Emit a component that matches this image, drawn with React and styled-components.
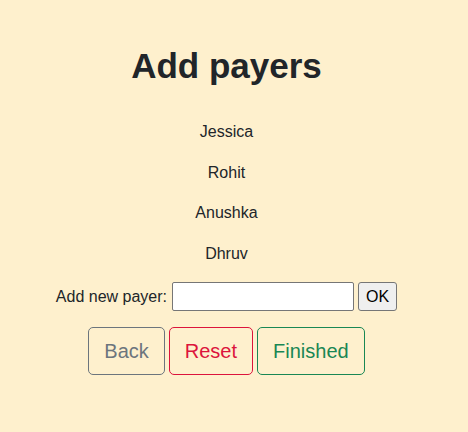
import React, { useState } from 'react';
import styled, { createGlobalStyle } from 'styled-components';

const GlobalStyle = createGlobalStyle`
  html, body {
    margin: 0;
    padding: 0;
    background: #fef0cd;
  }
  body {
    font-family: "Liberation Sans", Arial, sans-serif;
    color: #212529;
    font-size: 16px;
    line-height: 1.5;
  }
`;

const Page = styled.main`
  min-height: 432px;
  padding: 45px 15px 0 0;
  box-sizing: border-box;
  text-align: center;
`;

const Title = styled.h1`
  margin: 0 0 33px;
  font-size: 35px;
  font-weight: 700;
  line-height: 1.2;
`;

const Payer = styled.p`
  margin: 0 0 16.5px;
`;

const AddRow = styled.form`
  display: flex;
  justify-content: center;
  align-items: center;
  gap: 4px;
  margin-bottom: 16px;
`;

const Label = styled.label`
  margin-right: 1px;
`;

const TextInput = styled.input`
  width: 182px;
  height: 29px;
  box-sizing: border-box;
  border: 1px solid #767676;
  border-radius: 2px;
  background: #fff;
  font: inherit;
  padding: 1px 3px;
`;

const OkButton = styled.button`
  height: 29px;
  box-sizing: border-box;
  padding: 0 7px;
  border: 1px solid #767676;
  border-radius: 3px;
  background: #efefef;
  color: #000;
  font: 16px "Liberation Sans", Arial, sans-serif;
`;

const Actions = styled.div`
  display: flex;
  justify-content: center;
  gap: 4px;
`;

const tones = {
  secondary: '#6c757d',
  danger: '#dc143c',
  success: '#198754',
};

const OutlineButton = styled.button`
  height: 48px;
  padding: 0 15px;
  font: 20px/1.5 "Liberation Sans", Arial, sans-serif;
  border-radius: 5px;
  background: transparent;
  color: ${(p) => tones[p.$tone]};
  border: 1px solid ${(p) => tones[p.$tone]};
  cursor: pointer;
`;

export default function App() {
  const [payers] = useState(['Jessica', 'Rohit', 'Anushka', 'Dhruv']);
  const [name, setName] = useState('');

  return (
    <>
      <GlobalStyle />
      <Page>
        <Title>Add payers</Title>
        {payers.map((p) => (
          <Payer key={p}>{p}</Payer>
        ))}
        <AddRow onSubmit={(e) => e.preventDefault()}>
          <Label htmlFor="payer">Add new payer:</Label>
          <TextInput
            id="payer"
            value={name}
            onChange={(e) => setName(e.target.value)}
          />
          <OkButton type="submit">OK</OkButton>
        </AddRow>
        <Actions>
          <OutlineButton $tone="secondary">Back</OutlineButton>
          <OutlineButton $tone="danger">Reset</OutlineButton>
          <OutlineButton $tone="success">Finished</OutlineButton>
        </Actions>
      </Page>
    </>
  );
}
